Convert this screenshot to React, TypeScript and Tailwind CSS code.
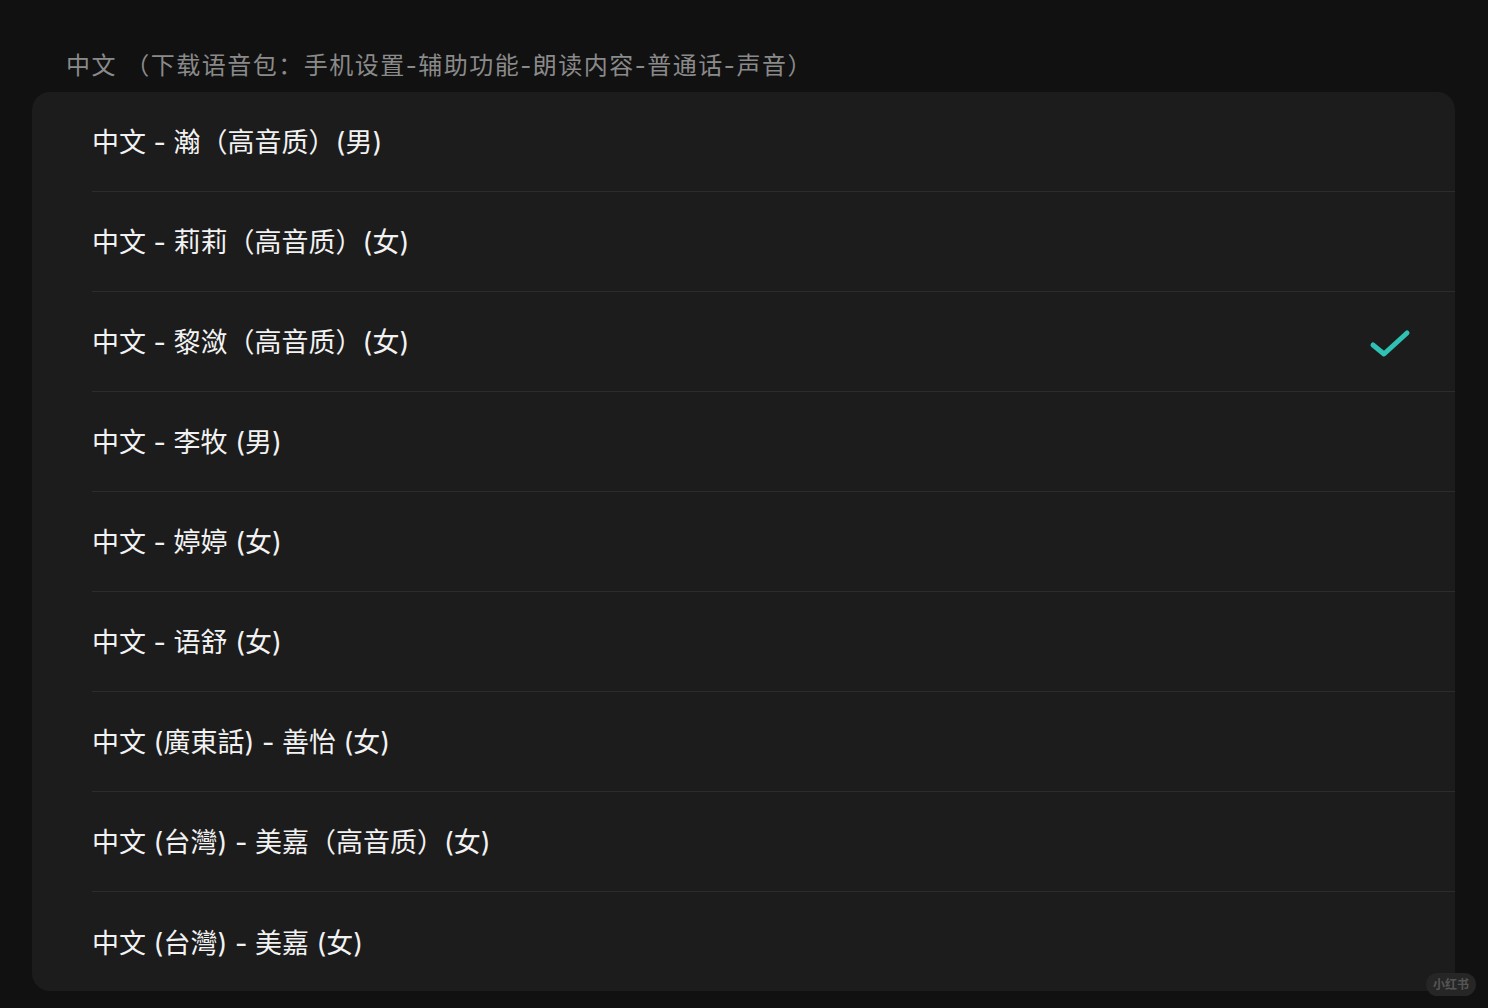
const voices = [
  { label: "中文 - 瀚（高音质）(男)" },
  { label: "中文 - 莉莉（高音质）(女)" },
  { label: "中文 - 黎潋（高音质）(女)", selected: true },
  { label: "中文 - 李牧 (男)" },
  { label: "中文 - 婷婷 (女)" },
  { label: "中文 - 语舒 (女)" },
  { label: "中文 (廣東話) - 善怡 (女)" },
  { label: "中文 (台灣) - 美嘉（高音质）(女)" },
  { label: "中文 (台灣) - 美嘉 (女)" },
];

function Check() {
  return (
    <svg width="44" height="36" viewBox="0 0 44 36" fill="none">
      <path
        d="M5 20 L16 29 L39 8"
        stroke="#2fc2b4"
        strokeWidth="5"
        strokeLinecap="round"
        strokeLinejoin="round"
      />
    </svg>
  );
}

export default function App() {
  return (
    <div
      className="w-[1488px] h-[1008px] bg-[#111111] relative overflow-hidden"
      style={{ fontFamily: 'Inter, "Noto Sans CJK SC", sans-serif' }}
    >
      <div className="pt-[50px] pl-[66px] h-[92px] text-[24px] leading-[32px] text-[#8a8a8a] tracking-[1.5px]">
        中文 （下载语音包：手机设置-辅助功能-朗读内容-普通话-声音）
      </div>
      <div className="ml-[32px] w-[1423px] h-[899px] bg-[#1c1c1c] rounded-[18px] overflow-hidden">
        {voices.map((v, i) => (
          <div key={i} className="pl-[60px]">
            <div
              className={
                "h-[100px] pt-[2px] flex items-center justify-between pr-[43px] " +
                (i < voices.length - 1 ? "border-b border-[#2c2c2c]" : "")
              }
            >
              <span className="text-[27px] text-[#f2f2f2] leading-none">{v.label}</span>
              {v.selected && <Check />}
            </div>
          </div>
        ))}
      </div>
      <div className="absolute left-[1426px] top-[973px] w-[50px] h-[23px] rounded-full bg-[#262626] text-[#555555] text-[12px] leading-[23px] text-center font-bold">
        小红书
      </div>
    </div>
  );
}
